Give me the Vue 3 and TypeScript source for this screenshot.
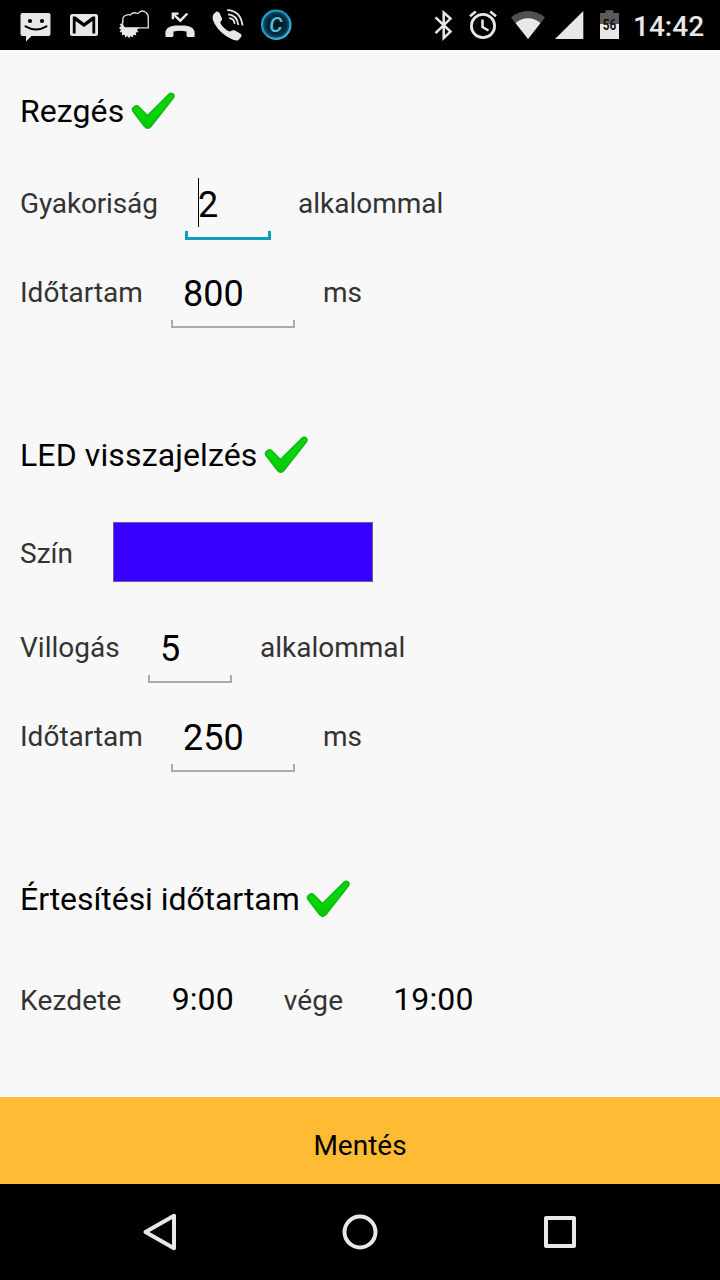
<script setup lang="ts">
import { ref } from 'vue'

const vibrationCount = ref('2')
const vibrationMs = ref('800')
const blinkCount = ref('5')
const blinkMs = ref('250')

// Small teeth around the weather icon's sun
const rays = Array.from({ length: 16 }, (_, i) => i * 22.5)
</script>

<template>
  <div class="screen">
    <header class="status">
      <div class="notifications">
        <svg viewBox="12 0 48 50">
          <path class="light" d="M22.5 13H48.5Q50.5 13 50.5 15V34Q50.5 36 48.5 36H31.5L26 41.5V36H22.5Q20.5 36 20.5 34V15Q20.5 13 22.5 13Z" />
          <circle cx="30" cy="21" r="2.1" /><circle cx="42" cy="21" r="2.1" />
          <path class="line dark" stroke-width="2" d="M25.500 26.300Q36 32.500 46.500 26.300" />
        </svg>
        <svg viewBox="60 0 48 50">
          <rect class="light" x="70" y="14" width="28" height="22" rx="2.5" />
          <path d="M72.800 33.500V16.500H75.500L84 23L92.500 16.500H95.200V33.500H92.400V21L84 27L75.600 21V33.500Z" />
        </svg>
        <svg viewBox="108 0 48 50">
          <circle class="light" cx="129" cy="28" r="8.5" />
          <g class="light">
            <path v-for="a in rays" :key="a" d="M127.500 20L129 17.800L130.500 20Z" :transform="`rotate(${a} 129 28)`" />
          </g>
          <path d="M124.500 27.800Q121.500 25 123 21.500Q122 17 125.500 15.500Q129 14 130.500 15Q132 12 136 13Q138 14 139 12.500Q142 9.500 146 12.500Q148.500 14.500 148.300 18V27.800Z" stroke="#e4e4e4" stroke-width="1.300" />
        </svg>
        <svg viewBox="156 0 48 50">
          <path class="line" stroke-width="2.4" d="M173 13.800L180.300 20.700L187.300 13.500M172.800 19.200V13.600H178.600" />
          <path class="light" d="M165.300 34.500Q164.500 26.500 175 25.500H185Q195.500 26.500 194.800 34.500L194.300 37H187.500L186.500 35.800V31.500Q180 30 173.500 31.500V35.800L172.500 37H165.800Z" />
        </svg>
        <svg viewBox="204 0 48 50">
          <path class="light" d="M213.300 14.500L216.500 11.600Q218 11 219.500 13L222 18.500Q222.300 20 221 21.200L220.200 22.500Q221.500 26 226.500 30L229.500 31.500L233 30.300Q234 30 235 30.500L241 34Q242 35.500 241.200 36.800L238.500 40Q236 41.700 230.500 38.500Q219.500 33 214.500 23.500Q211.500 18 213.300 14.500Z" />
          <path class="line" stroke-width="1.800" d="M227.200 10.200Q240.500 10.500 242.500 25.500M228 14.300Q237 14.800 238.300 25M229.300 18.200Q234 18.500 234.700 23.800" />
        </svg>
        <svg viewBox="252 0 48 50">
          <defs>
            <radialGradient id="orb"><stop offset="0" stop-color="#06131b" /><stop offset=".7" stop-color="#062a3b" /><stop offset="1" stop-color="#0a6388" /></radialGradient>
            <linearGradient id="rim" x2="1" y2="1"><stop offset="0" stop-color="#28a7cf" /><stop offset=".45" stop-color="#1a93be" /><stop offset="1" stop-color="#43cae6" /></linearGradient>
          </defs>
          <circle cx="276.200" cy="24.700" r="14.200" fill="url(#orb)" stroke="url(#rim)" stroke-width="2.200" />
          <text class="orb-letter" x="276" y="32.200" text-anchor="middle">C</text>
        </svg>
      </div>
      <div class="system">
        <svg class="w40" viewBox="423 0 40 50">
          <path class="line" stroke-width="2.500" d="M435.500 17.300L450.500 31.600L443.700 38V12.500L450.500 18.600L435.500 33.200" />
        </svg>
        <svg class="w40" viewBox="463 0 40 50">
          <circle class="line" cx="483" cy="26" r="11.600" stroke-width="2.800" />
          <path class="line" stroke-width="2.500" d="M482.500 19.500V27L488.500 30.500M470 16.300L475.800 11.500M490.200 11.500L496 16.300" />
        </svg>
        <svg class="w45" viewBox="503 0 45 50">
          <path fill="#505050" d="M528 39L511 17.500Q518 11 528 11T545 17.500Z" />
          <path class="light" d="M528 39L515.500 23Q521 18.300 528 18.300T540.500 23Z" />
        </svg>
        <svg class="w42" viewBox="548 0 42 50"><path class="light" d="M583.300 11V39H555Z" /></svg>
        <svg class="w34" viewBox="590 0 34 50">
          <path fill="#5b5b5b" d="M600 13H605.500V10.300H613.500V13H619V24.500H600Z" />
          <path class="light" d="M600 24H619V39H600Z" />
          <text class="charge" x="609.600" y="30.200" text-anchor="middle" textLength="13.500" lengthAdjust="spacingAndGlyphs">56</text>
        </svg>
        <time class="clock">14:42</time>
      </div>
    </header>

    <main class="content">
      <section class="vibration">
        <h2>Rezgés<svg class="check" viewBox="0 0 44 38"><use href="#tick" /></svg></h2>
        <div class="row first">
          <label>Gyakoriság</label>
          <div class="field focused"><input v-model="vibrationCount" /><i class="caret"></i></div>
          <span>alkalommal</span>
        </div>
        <div class="row duration">
          <label>Időtartam</label>
          <div class="field"><input v-model="vibrationMs" /></div>
          <span>ms</span>
        </div>
      </section>

      <section class="led">
        <h2>LED visszajelzés<svg class="check" viewBox="0 0 44 38"><use href="#tick" /></svg></h2>
        <div class="color"><label>Szín</label><div class="swatch"></div></div>
        <div class="row blink">
          <label>Villogás</label>
          <div class="field"><input v-model="blinkCount" /></div>
          <span>alkalommal</span>
        </div>
        <div class="row duration">
          <label>Időtartam</label>
          <div class="field"><input v-model="blinkMs" /></div>
          <span>ms</span>
        </div>
      </section>

      <section class="period">
        <h2>Értesítési időtartam<svg class="check" viewBox="0 0 44 38">
          <defs>
            <linearGradient id="green" x1="0" y1="0" x2=".3" y2="1"><stop offset="0" stop-color="#10cc10" /><stop offset=".6" stop-color="#05d905" /><stop offset="1" stop-color="#06c806" /></linearGradient>
            <g id="tick">
              <path d="M1.200 19.500Q0 17 1.600 15.300L4.200 13.300Q6 12.300 7.700 13.800L16.500 22.500L37.700 1.500Q39.500 0 41.500 .8L43 1.800Q44.500 3.500 43.200 5.900L20.700 34.700Q16.700 39.300 12.800 34.700Z" fill="#12b814" />
              <path d="M2.500 18.200Q2 17 3 16.200L5 14.900Q6 14.500 7 15.400L16.500 24.700L39 2.600Q40 1.800 41.300 2.500Q42.800 3.500 41.700 5.100L19.500 33.400Q16.700 36.500 14 33.400Z" fill="url(#green)" />
            </g>
          </defs>
          <use href="#tick" />
        </svg></h2>
        <div class="times">
          <label>Kezdete</label><time>9:00</time><label>vége</label><time>19:00</time>
        </div>
      </section>
    </main>

    <button class="save">Mentés</button>

    <nav class="nav">
      <svg viewBox="0 0 48 48"><path d="M9.500 24L38 7.800V40.200Z" /></svg>
      <svg viewBox="0 0 48 48"><circle cx="24" cy="24" r="15.500" /></svg>
      <svg viewBox="0 0 48 48"><rect x="10" y="10" width="28" height="28" /></svg>
    </nav>
  </div>
</template>

<style>
body { margin: 0; }
</style>

<style scoped>
.screen {
  width: 720px;
  height: 1280px;
  display: flex;
  flex-direction: column;
  overflow: hidden;
  background: #f8f8f8;
  color: #000;
  font-family: Roboto, "Noto Sans", sans-serif;
}
.status {
  height: 50px;
  flex: none;
  display: flex;
  justify-content: space-between;
  background: #000;
}
.status svg { display: block; height: 50px; flex: none; }
.notifications { display: flex; padding-left: 12px; }
.notifications svg { width: 48px; }
.system { display: flex; width: 297px; }
.w40 { width: 40px; }
.w45 { width: 45px; }
.w42 { width: 42px; }
.w34 { width: 34px; }
.light { fill: #e8e8e8; }
.line { fill: none; stroke: #e8e8e8; }
.dark { stroke: #000; stroke-linecap: round; }
.charge { font-size: 15px; font-weight: 700; fill: #111; }
.orb-letter { font-size: 21px; font-style: italic; font-weight: 500; fill: #57bfd8; }
.clock {
  padding-left: 9px;
  color: #e8e8e8;
  font-size: 28px;
  font-weight: 500;
  line-height: 53px;
}
.content { flex: 1; padding: 0 20px; }
h2 {
  display: flex;
  gap: 7px;
  margin: 0;
  height: 44px;
  font-size: 32px;
  font-weight: 400;
  line-height: 44px;
}
.check { width: 44px; height: 38px; margin-top: 3px; flex: none; }
.vibration { padding-top: 39px; }
.vibration h2 { letter-spacing: 0.08px; }
.led { padding-top: 105px; }
.led h2 { letter-spacing: 0.12px; }
.period { padding-top: 105px; }
.period h2 { letter-spacing: -0.06px; gap: 6px; }
.row {
  display: grid;
  height: 61px;
}
.row > span { padding-left: 28px; }
.first { grid-template-columns: 165px 86px auto; height: 62px; margin-top: 45px; }
.first > label { letter-spacing: -0.15px; }
.first > span { padding-left: 27px; }
.duration { grid-template-columns: 151px 124px auto; margin-top: 28px; }
.vibration .duration { margin-top: 27px; }
.blink { grid-template-columns: 128px 84px auto; margin-top: 37px; }
label,
.row > span {
  color: #333;
  font-size: 28px;
  line-height: 51px;
  white-space: nowrap;
}
.field { position: relative; }
.field input {
  display: block;
  box-sizing: border-box;
  width: 100%;
  height: 55px;
  padding: 0 0 0 12px;
  border: 0;
  outline: 0;
  background: transparent;
  color: #000;
  font: 36px/55px Roboto, "Noto Sans", sans-serif;
}
.focused input { padding-left: 13px; }
.field::after {
  content: "";
  position: absolute;
  inset: auto 0 0;
  height: 6px;
  border: solid #acacac;
  border-width: 0 2px 2px;
}
.focused::after { border-color: #0f9bbd; border-width: 0 3px 3px; }
.caret {
  position: absolute;
  left: 13px;
  top: 0;
  width: 1px;
  height: 49px;
  background: #000;
}
.color { display: flex; gap: 40px; margin-top: 45px; }
.color label { line-height: 63px; }
.swatch {
  box-sizing: border-box;
  width: 260px;
  height: 60px;
  border: 1px solid #66609a;
  background: #3800ff;
}
.times {
  display: flex;
  align-items: baseline;
  gap: 50px;
  margin-top: 54px;
}
.times label { letter-spacing: 0.18px; }
.times time { font-size: 32px; line-height: 48px; letter-spacing: 0.1px; }
.save {
  flex: none;
  height: 87px;
  padding: 9px 0 0;
  border: 0;
  background: #ffbb33;
  color: #000;
  font: 28px/33px Roboto, "Noto Sans", sans-serif;
}
.nav {
  flex: none;
  height: 96px;
  display: flex;
  justify-content: center;
  align-items: center;
  gap: 152px;
  background: #000;
}
.nav svg {
  width: 48px;
  height: 48px;
  fill: none;
  stroke: #e8e8e8;
  stroke-width: 4;
  stroke-linejoin: round;
}
</style>
